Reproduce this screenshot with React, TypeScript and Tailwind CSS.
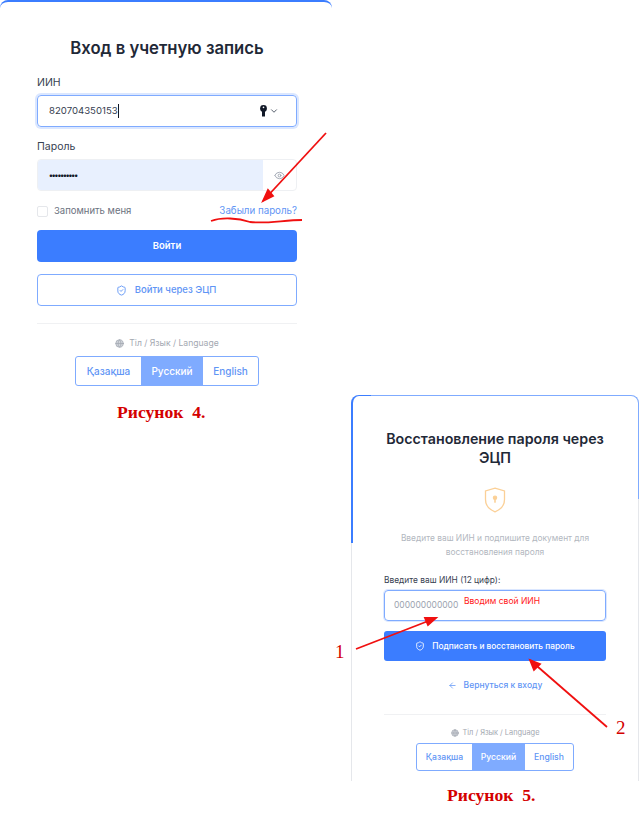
import { ArrowLeft, ChevronDown, Eye, Globe, ShieldCheck } from 'lucide-react'

function LangSwitch({ small }: { small?: boolean }) {
  const h = small ? 'h-[28px] text-[8.6px]' : 'h-[30px] text-[10px]'
  return (
    <div className={`flex ${h} border border-[#7fabff] rounded-[3px] overflow-hidden font-medium`}>
      <div className={`${small ? 'w-[55px]' : 'w-[65px]'} flex items-center justify-center text-[#5f95f5]`}>Қазақша</div>
      <div className={`${small ? 'w-[53px]' : 'w-[62px]'} flex items-center justify-center bg-[#7fabff] text-white`}>Русский</div>
      <div className={`${small ? 'w-[48px]' : 'w-[55px]'} flex items-center justify-center text-[#5f95f5]`}>English</div>
    </div>
  )
}

function KeyIcon() {
  return (
    <svg width="9" height="12" viewBox="0 0 9 12" fill="#111827">
      <circle cx="4.5" cy="3.4" r="3.4" />
      <rect x="3" y="5" width="3" height="6.5" />
      <circle cx="4.5" cy="2.4" r="0.8" fill="#fff" />
    </svg>
  )
}

function LoginCard() {
  return (
    <div className="w-[332px] h-[390px] border-t-2 border-[#3b7dff] rounded-t-[8px] pl-[37px] pr-[35px] pt-[35px]">
      <h1 className="text-[16.7px] leading-[22px] font-semibold text-[#1f2937] text-center">Вход в учетную запись</h1>
      <div className="mt-[17px] text-[10.5px] leading-[14px] text-[#374151]">ИИН</div>
      <div className="mt-[5px] h-[32px] border-[1.5px] border-[#7fabff] rounded-[4px] shadow-[0_0_0_2px_#dbe7ff] flex items-center pl-[11px] pr-[17px]">
        <span className="text-[9.6px] text-[#374151] border-r border-[#111827] leading-[14px]">820704350153</span>
        <div className="ml-auto flex items-center gap-[1px]">
          <KeyIcon />
          <ChevronDown size={10} className="text-[#374151]" />
        </div>
      </div>
      <div className="mt-[13px] text-[10.5px] leading-[14px] text-[#374151]">Пароль</div>
      <div className="mt-[5px] h-[32px] flex border border-[#eef0f3] rounded-[4px] overflow-hidden">
        <div className="flex-1 bg-[#e8f0fe] flex items-center pl-[11px] text-[8px] font-bold text-[#111827] tracking-[-1px]">••••••••••</div>
        <div className="w-[33px] flex items-center justify-center">
          <Eye size={11} className="text-[#9ca3af]" />
        </div>
      </div>
      <div className="mt-[13px] flex items-center h-[14px]">
        <div className="w-[11px] h-[11px] border border-[#e5e7eb] rounded-[2px]" />
        <span className="ml-[6px] text-[9.5px] text-[#6b7280]">Запомнить меня</span>
        <span className="ml-auto text-[9.75px] text-[#5f95f5]">Забыли пароль?</span>
      </div>
      <div className="mt-[12px] h-[32px] bg-[#3b7dff] rounded-[4px] flex items-center justify-center pt-[1px] text-white text-[9.5px] font-semibold">Войти</div>
      <div className="mt-[12px] h-[32px] border border-[#7fabff] rounded-[4px] flex items-center justify-center gap-[8px] pt-[1px] pr-[2px] text-[#5f95f5] text-[9.5px] font-medium">
        <ShieldCheck size={11} />
        Войти через ЭЦП
      </div>
      <div className="mt-[17px] border-t border-[#f0f1f3]" />
      <div className="mt-[13px] flex items-center justify-center gap-[5px] text-[8.6px] leading-[12px] text-[#a3a8b1]">
        <Globe size={9} className="fill-[#d1d5db]" />
        Tіл / Язык / Language
      </div>
      <div className="mt-[7px] flex justify-center">
        <LangSwitch />
      </div>
    </div>
  )
}

function RecoveryCard() {
  return (
    <div className="w-[288px] h-[386px] relative rounded-t-[8px] border-r border-[#e5e7eb] border-l border-l-[#e5e7eb] bg-white px-[32px] pt-[34px]">
      <div className="absolute left-[-1px] top-0 h-[148px] w-[20px] border-l-2 border-t border-[#3b7dff] rounded-tl-[8px]" />
      <div className="absolute left-[19px] right-[19px] top-0 h-[1px] bg-[#7fabff]" />
      <div className="absolute right-[-1px] top-0 h-[104px] w-[20px] border-r border-t border-[#7fabff] rounded-tr-[8px]" />
      <h2 className="text-[14.25px] leading-[19px] font-semibold text-[#1f2937] text-center">Восстановление пароля через ЭЦП</h2>
      <div className="mt-[20px] flex justify-center">
        <svg width="22" height="26" viewBox="0 0 22 26" fill="none" stroke="#fbd097" strokeWidth="1.3">
          <path d="M11 1.2 L20.5 4 V12.5 C20.5 18.5 16 22.8 11 24.8 C6 22.8 1.5 18.5 1.5 12.5 V4 Z" />
          <circle cx="11" cy="10.8" r="1.6" fill="#fbd097" />
          <rect x="10.2" y="11.5" width="1.6" height="4.2" fill="#fbd097" stroke="none" />
        </svg>
      </div>
      <p className="mt-[18px] text-[8.4px] leading-[14px] text-[#b2b7c0] text-center px-[10px]">Введите ваш ИИН и подпишите документ для восстановления пароля</p>
      <div className="mt-[15px] text-[8.4px] leading-[12px] text-[#374151]">Введите ваш ИИН (12 цифр):</div>
      <div className="mt-[4px] h-[31px] relative border-[1.5px] border-[#7fabff] rounded-[4px] shadow-[0_0_0_1px_#dbe7ff] flex items-center pl-[9px] text-[8.5px] text-[#9ca3af]">
        000000000000
        <span className="absolute left-[79px] top-[4px] text-[8.5px] text-[#ff2020]">Вводим свой ИИН</span>
      </div>
      <div className="mt-[10px] h-[30px] bg-[#3b7dff] rounded-[3px] flex items-center justify-center gap-[7px] text-white text-[8.3px] font-medium">
        <ShieldCheck size={10} />
        Подписать и восстановить пароль
      </div>
      <div className="mt-[18px] flex items-center justify-center gap-[7px] text-[#5f95f5] text-[8.5px] font-medium leading-[12px]">
        <ArrowLeft size={9} />
        Вернуться к входу
      </div>
      <div className="mt-[23px] border-t border-[#f0f1f3]" />
      <div className="mt-[12px] flex items-center justify-center gap-[4px] text-[7.4px] leading-[11px] text-[#a3a8b1]">
        <Globe size={8} className="fill-[#d1d5db]" />
        Tіл / Язык / Language
      </div>
      <div className="mt-[5px] flex justify-center">
        <LangSwitch small />
      </div>
    </div>
  )
}

function Annotations() {
  return (
    <svg className="absolute inset-0 pointer-events-none" width="640" height="815" fill="none" stroke="#f01010" strokeWidth="1.8">
      <path d="M326 133 L263 201" />
      <path d="M263 201 L273 196 L268 190 Z" fill="#f01010" />
      <path d="M211 221 C222 217 238 218 250 222 C265 224 285 220 302 220" />
      <path d="M356 649 L436 618" />
      <path d="M436 618 L425 618 L428 625 Z" fill="#f01010" />
      <path d="M607 727 L530 660" />
      <path d="M530 660 L534 670 L540 664 Z" fill="#f01010" />
    </svg>
  )
}

export default function App() {
  return (
    <div className="relative w-[640px] h-[815px] bg-white overflow-hidden font-['Inter',sans-serif]">
      <div className="flex">
        <div className="w-[351px] shrink-0">
          <LoginCard />
          <div className="w-[332px] mt-[12px] pl-[117px] text-[17.6px] leading-[20px] font-bold text-[#d40000] font-['Liberation_Serif',serif]">Рисунок&nbsp;&nbsp;4.</div>
        </div>
        <div className="mt-[395px]">
          <RecoveryCard />
          <div className="mt-[4px] pl-[96px] text-[17.6px] leading-[20px] font-bold text-[#d40000] font-['Liberation_Serif',serif]">Рисунок&nbsp;&nbsp;5.</div>
        </div>
      </div>
      <span className="absolute left-[335px] top-[642px] text-[19px] leading-[20px] text-[#d40000] font-['Liberation_Serif',serif]">1</span>
      <span className="absolute left-[616px] top-[718px] text-[19px] leading-[20px] text-[#d40000] font-['Liberation_Serif',serif]">2</span>
      <Annotations />
    </div>
  )
}
